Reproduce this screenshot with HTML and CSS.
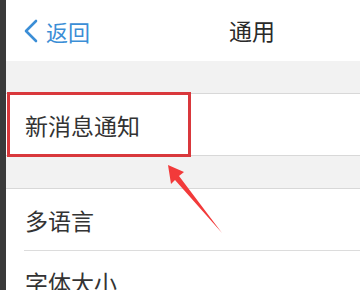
FILE: index.html
```html
<!DOCTYPE html>
<html lang="zh">
<head>
<meta charset="utf-8">
<link rel="stylesheet" href="styles.css">
</head>
<body>
<div class="screen">
  <div class="edge"></div>
  <div class="app">
    <header class="nav">
      <div class="back">
        <svg class="chev" width="16" height="24" viewBox="0 0 16 24"><path d="M13 2 L3 12 L13 22" fill="none" stroke="#3b8ed6" stroke-width="2.6" stroke-linecap="round" stroke-linejoin="round"/></svg>
        <span class="back-text">返回</span>
      </div>
      <div class="title">通用</div>
    </header>
    <div class="gap"></div>
    <div class="group">
      <div class="row"><span class="label">新消息通知</span></div>
    </div>
    <div class="gap"></div>
    <div class="group">
      <div class="row sep"><span class="label">多语言</span></div>
      <div class="row"><span class="label">字体大小</span></div>
    </div>
  </div>
  <div class="highlight"></div>
  <svg class="arrow" width="360" height="290" viewBox="0 0 360 290"><polygon points="168,165 184,172 179,176 222,233 175,180 171,184" fill="#f23a3a"/></svg>
</div>
</body>
</html>
```
FILE: styles.css
```css
html, body {
  margin: 0;
  padding: 0;
}
body {
  width: 360px;
  height: 290px;
  overflow: hidden;
  font-family: "Noto Sans CJK SC", "Noto Sans", sans-serif;
}
.screen {
  position: relative;
  display: flex;
  width: 360px;
  height: 290px;
  overflow: hidden;
}
.edge {
  width: 6px;
  flex: none;
  background: #3a3a3a;
}
.app {
  flex: 1;
  background: #f2f2f2;
}
.nav {
  height: 61px;
  background: #fff;
  position: relative;
  display: flex;
  align-items: center;
}
.back {
  display: flex;
  align-items: center;
  padding-left: 17px;
  gap: 7px;
}
.chev {
  display: block;
}
.back-text {
  color: #3b8ed6;
  font-size: 22px;
  line-height: 26px;
}
.title {
  position: absolute;
  left: 223px;
  top: 17px;
  font-size: 23px;
  line-height: 26px;
  color: #2a2a2a;
}
.gap {
  height: 32px;
}
.group {
  background: #fff;
  border-top: 1px solid #d8d8d8;
  border-bottom: 1px solid #d8d8d8;
}
.row {
  height: 61px;
  display: flex;
  align-items: center;
  padding-left: 19px;
  position: relative;
}
.row.sep::after {
  content: "";
  position: absolute;
  left: 18px;
  right: 0;
  bottom: 0;
  height: 1px;
  background: #dcdcdc;
}
.row.sep {
  height: 62px;
}
.label {
  font-size: 23px;
  line-height: 26px;
  color: #333;
}
.highlight {
  position: absolute;
  left: 7px;
  top: 92px;
  width: 178px;
  height: 59px;
  border: 3px solid #d9383c;
}
.arrow {
  position: absolute;
  left: 0;
  top: 0;
}
```
